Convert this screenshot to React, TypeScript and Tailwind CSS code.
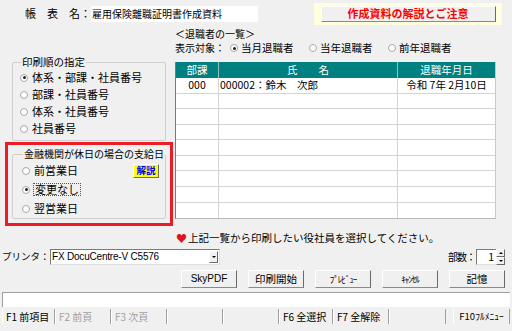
import React from "react";

const Radio = ({ checked = false }: { checked?: boolean }) => (
  <span className="inline-flex w-[8px] h-[8px] rounded-full border border-[#a8a8a8] bg-white items-center justify-center shrink-0">
    {checked && <span className="w-[3px] h-[3px] rounded-full bg-[#222]" />}
  </span>
);

const Btn = ({ children, w = "w-[56px]" }: { children: React.ReactNode; w?: string }) => (
  <button
    className={`${w} h-[18px] bg-[#f0f0f0] border border-t-white border-l-white border-r-[#696969] border-b-[#8a8a8a] text-[10.5px] leading-none flex items-center justify-center whitespace-nowrap`}
  >
    {children}
  </button>
);

const rowHeights = ["h-[16px]", "h-[15px]", "h-[16px]", "h-[15px]", "h-[16px]", "h-[15px]", "h-[16px]", "h-[16px]", "h-[15px]"];

const fkeys: { label: string; w: string; off?: boolean }[] = [
  { label: "F1 前項目", w: "w-[53px]" },
  { label: "F2 前頁", w: "w-[56px]", off: true },
  { label: "F3 次頁", w: "w-[56px]", off: true },
  { label: "", w: "w-[56px]" },
  { label: "", w: "w-[56px]" },
  { label: "F6 全選択", w: "w-[54px]" },
  { label: "F7 全解除", w: "w-[56px]" },
  { label: "", w: "w-[57px]" },
];

export default function App() {
  return (
    <div className="w-[512px] h-[331px] bg-[#f0f0f0] overflow-hidden flex flex-col text-black font-['Noto_Sans_CJK_JP',sans-serif]">
      {/* header */}
      <div className="h-[27px] flex items-center shrink-0">
        <span className="ml-[25px] text-[11px] leading-none w-[66px] shrink-0 whitespace-nowrap">帳　表　名：</span>
        <div className="w-[167px] h-[16px] bg-white flex items-center pl-[1px] text-[10px] leading-none whitespace-nowrap">
          雇用保険離職証明書作成資料
        </div>
        <div className="ml-auto mr-[10px] w-[188px] h-[22px] bg-[#ffffe0] flex items-center justify-center">
          <button className="w-[175px] h-[16px] bg-[#f0f0f0] border border-t-white border-l-white border-r-[#696969] border-b-[#8a8a8a] text-[11px] font-bold text-[#ff0000] leading-none flex items-center justify-center">
            作成資料の解説とご注意
          </button>
        </div>
      </div>

      {/* body */}
      <div className="h-[219px] flex shrink-0">
        {/* left column */}
        <div className="w-[175px] shrink-0 pt-[28px] flex flex-col">
          <fieldset className="ml-[12px] w-[154px] border border-[#cfcfcf] rounded-[2px] pl-[7px] pb-[3px]">
            <legend className="ml-[1px] px-[1px] text-[10.5px] leading-[14px]">印刷順の指定</legend>
            {["体系・部課・社員番号", "部課・社員番号", "体系・社員番号", "社員番号"].map((t, i) => (
              <div key={t} className="h-[17px] flex items-center gap-[4px] text-[11px] leading-none">
                <Radio checked={i === 0} />
                <span>{t}</span>
              </div>
            ))}
          </fieldset>
          <div className="mt-[1px] ml-[5px] w-[168px] h-[84px] border-[3px] border-[#ed1c24] pt-[2px]">
            <fieldset className="ml-[4px] w-[154px] border border-[#cfcfcf] rounded-[2px] pl-[9px]">
              <legend className="ml-[1px] px-[1px] text-[10px] leading-[14px] whitespace-nowrap">金融機関が休日の場合の支給日</legend>
              <div className="h-[19px] flex items-center gap-[4px] text-[11px] leading-none">
                <Radio />
                <span>前営業日</span>
                <button className="ml-auto mr-[6px] w-[26px] h-[14px] bg-[#ffff00] border border-t-white border-l-white border-r-[#696969] border-b-[#696969] text-[9.5px] font-bold text-[#0000ff] leading-none flex items-center justify-center">
                  解説
                </button>
              </div>
              <div className="h-[19px] flex items-center gap-[3px] text-[11px] leading-none">
                <Radio checked />
                <span className="border border-dotted border-[#555] px-[1px] h-[13px] flex items-center">変更なし</span>
              </div>
              <div className="h-[19px] flex items-center gap-[4px] text-[11px] leading-none">
                <Radio />
                <span>翌営業日</span>
              </div>
            </fieldset>
          </div>
        </div>

        {/* right column */}
        <div className="flex-1 flex flex-col">
          <div className="h-[14px] flex items-center text-[10px] leading-none whitespace-nowrap">＜退職者の一覧＞</div>
          <div className="h-[14px] flex items-center text-[10.5px] leading-none whitespace-nowrap">
            <span className="w-[55px] shrink-0 text-[10px]">表示対象：</span>
            <span className="w-[79px] shrink-0 flex items-center gap-[3px]">
              <Radio checked />
              <span>当月退職者</span>
            </span>
            <span className="w-[79px] shrink-0 flex items-center gap-[3px]">
              <Radio />
              <span>当年退職者</span>
            </span>
            <span className="flex items-center gap-[3px]">
              <Radio />
              <span>前年退職者</span>
            </span>
          </div>
          <div className="mt-[7px] w-[321px] border-l border-b border-r border-l-[#7a7a7a] border-b-[#b8b8b8] border-r-[#c8c8c8] bg-white">
            <div className="h-[16px] flex bg-[#008080] text-white text-[10.5px] leading-none">
              <div className="w-[43px] flex items-center justify-center border-r border-[#8cc4c4]">部課</div>
              <div className="w-[179px] flex items-center justify-center border-r border-[#8cc4c4]">氏　　名</div>
              <div className="flex-1 flex items-center justify-center">退職年月日</div>
            </div>
            {rowHeights.map((h, i) => (
              <div key={i} className={`${h} flex text-[10.5px] leading-none ${i < 8 ? "border-b border-[#d4d4d4]" : ""}`}>
                <div className="w-[43px] flex items-center justify-center border-r border-[#d4d4d4]">{i === 0 ? "000" : ""}</div>
                <div className="w-[179px] flex items-center pl-[1px] border-r border-[#d4d4d4]">
                  {i === 0 ? "000002：鈴木　次郎" : ""}
                </div>
                <div className="flex-1 flex items-center justify-center">{i === 0 ? "令和 7年 2月10日" : ""}</div>
              </div>
            ))}
          </div>
          <div className="mt-[12px] h-[14px] flex items-center text-[10.5px] leading-none whitespace-nowrap">
            <span className="text-[#e0141e] text-[11px] w-[12px] ml-[1px]">♥</span>
            <span>上記一覧から印刷したい役社員を選択してください。</span>
          </div>
        </div>
      </div>

      {/* printer row */}
      <div className="mt-[3px] h-[16px] flex items-center shrink-0">
        <span className="ml-[2px] w-[48px] shrink-0 text-[9.5px] leading-none whitespace-nowrap">プリンタ：</span>
        <div className="w-[170px] h-[16px] bg-white border border-t-[#7a7a7a] border-l-[#7a7a7a] border-r-[#e0e0e0] border-b-[#e0e0e0] flex items-center">
          <span className="flex-1 pl-[1px] text-[10px] leading-none font-['Liberation_Sans',sans-serif] tracking-[-0.2px] whitespace-nowrap">
            FX DocuCentre-V C5576
          </span>
          <span className="w-[9px] h-[12px] mr-[1px] bg-[#f0f0f0] border border-t-white border-l-white border-r-[#696969] border-b-[#696969] flex items-center justify-center">
            <span className="w-0 h-0 border-l-[2px] border-r-[2px] border-t-[2px] border-l-transparent border-r-transparent border-t-black" />
          </span>
        </div>
        <span className="ml-auto mr-[1px] text-[10px] tracking-[-1px] leading-none whitespace-nowrap">部数：</span>
        <div className="mr-[7px] flex h-[16px]">
          <div className="w-[20px] h-[16px] bg-white border border-t-[#7a7a7a] border-l-[#7a7a7a] border-r-0 border-b-[#e0e0e0] flex items-center justify-end pr-[2px] text-[10.5px] leading-none">
            1
          </div>
          <div className="w-[9px] h-[16px] flex flex-col bg-white">
            <span className="h-[8px] bg-[#f0f0f0] border border-t-white border-l-white border-r-[#696969] border-b-[#696969] flex items-center justify-center">
              <span className="w-0 h-0 border-l-[2px] border-r-[2px] border-b-[2px] border-l-transparent border-r-transparent border-b-black" />
            </span>
            <span className="h-[8px] bg-[#f0f0f0] border border-t-white border-l-white border-r-[#696969] border-b-[#696969] flex items-center justify-center">
              <span className="w-0 h-0 border-l-[2px] border-r-[2px] border-t-[2px] border-l-transparent border-r-transparent border-t-black" />
            </span>
          </div>
        </div>
      </div>

      {/* buttons */}
      <div className="mt-[5px] h-[18px] flex justify-end gap-[11px] pr-[7px] shrink-0">
        <Btn>
          <span className="font-['Liberation_Sans',sans-serif] text-[10px]">SkyPDF</span>
        </Btn>
        <Btn>印刷開始</Btn>
        <Btn>
          <span className="text-[9px] tracking-[-1px]">ﾌﾟﾚﾋﾞｭｰ</span>
        </Btn>
        <Btn>
          <span className="text-[9px] tracking-[-1px]">ｷｬﾝｾﾙ</span>
        </Btn>
        <Btn>記憶</Btn>
      </div>

      {/* message bar */}
      <div className="mt-[4px] mx-[2px] h-[15px] bg-white border-t border-l border-[#a0a0a0] shrink-0" />

      {/* function keys */}
      <div className="mt-[2px] h-[15px] flex pl-[2px] shrink-0">
        {fkeys.map((k, i) => (
          <div
            key={i}
            className={`${k.w} h-[15px] border-r border-l border-r-[#a0a0a0] border-l-white flex items-center pl-[3px] text-[10px] leading-none whitespace-nowrap ${k.off ? "text-[#a0a0a0]" : "text-black"}`}
          >
            {k.label}
          </div>
        ))}
        <div className="ml-[7px] w-[57px] h-[15px] border-r border-l border-r-[#a0a0a0] border-l-white flex items-center justify-center text-[9.5px] leading-none whitespace-nowrap">
          F10ﾌﾙﾒﾆｭｰ
        </div>
      </div>
    </div>
  );
}
